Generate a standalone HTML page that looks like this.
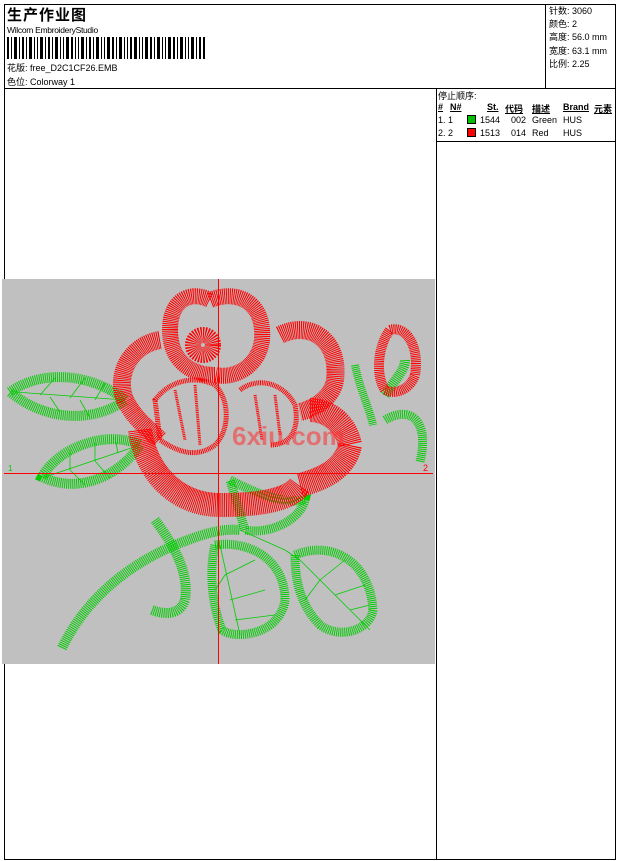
<!DOCTYPE html>
<html><head><meta charset="utf-8"><style>
*{margin:0;padding:0}
body{width:620px;height:861px;background:#fff;position:relative;overflow:hidden;font-family:"Liberation Sans","Noto Sans CJK SC",sans-serif;font-size:9px;color:#000}
.a{position:absolute;white-space:nowrap}
.l{position:absolute;background:#000}
</style></head><body>
<div class="l" style="left:4px;top:4px;width:612px;height:1px"></div>
<div class="l" style="left:4px;top:859px;width:612px;height:1px"></div>
<div class="l" style="left:4px;top:4px;width:1px;height:856px"></div>
<div class="l" style="left:615px;top:4px;width:1px;height:856px"></div>
<div class="l" style="left:4px;top:88px;width:612px;height:1px"></div>
<div class="l" style="left:545px;top:4px;width:1px;height:84px"></div>
<div class="l" style="left:436px;top:88px;width:1px;height:771px"></div>
<div class="l" style="left:436px;top:141px;width:180px;height:1px"></div>

<div class="a" style="left:7px;top:4px;font-size:15px;font-weight:bold;letter-spacing:1px">生产作业图</div>
<div class="a" style="left:7px;top:25px;font-size:8.5px;letter-spacing:-0.3px">Wilcom EmbroideryStudio</div>
<svg class="a" style="left:7px;top:37px" width="198" height="22">
<g fill="#000">
<rect x="0" y="0" width="2" height="22"/><rect x="4" y="0" width="1" height="22"/><rect x="7" y="0" width="3" height="22"/><rect x="12" y="0" width="1" height="22"/><rect x="15" y="0" width="2" height="22"/><rect x="19" y="0" width="1" height="22"/><rect x="22" y="0" width="3" height="22"/><rect x="27" y="0" width="1" height="22"/><rect x="30" y="0" width="1" height="22"/><rect x="33" y="0" width="3" height="22"/><rect x="38" y="0" width="1" height="22"/><rect x="41" y="0" width="2" height="22"/><rect x="45" y="0" width="1" height="22"/><rect x="48" y="0" width="3" height="22"/><rect x="53" y="0" width="1" height="22"/><rect x="56" y="0" width="1" height="22"/><rect x="59" y="0" width="3" height="22"/><rect x="64" y="0" width="2" height="22"/><rect x="68" y="0" width="1" height="22"/><rect x="71" y="0" width="1" height="22"/><rect x="74" y="0" width="3" height="22"/><rect x="79" y="0" width="1" height="22"/><rect x="82" y="0" width="2" height="22"/><rect x="86" y="0" width="1" height="22"/><rect x="89" y="0" width="3" height="22"/><rect x="94" y="0" width="1" height="22"/><rect x="97" y="0" width="1" height="22"/><rect x="100" y="0" width="3" height="22"/><rect x="105" y="0" width="2" height="22"/><rect x="109" y="0" width="1" height="22"/><rect x="112" y="0" width="3" height="22"/><rect x="117" y="0" width="1" height="22"/><rect x="120" y="0" width="1" height="22"/><rect x="123" y="0" width="2" height="22"/><rect x="127" y="0" width="3" height="22"/><rect x="132" y="0" width="1" height="22"/><rect x="135" y="0" width="1" height="22"/><rect x="138" y="0" width="3" height="22"/><rect x="143" y="0" width="2" height="22"/><rect x="147" y="0" width="1" height="22"/><rect x="150" y="0" width="3" height="22"/><rect x="155" y="0" width="1" height="22"/><rect x="158" y="0" width="1" height="22"/><rect x="161" y="0" width="3" height="22"/><rect x="166" y="0" width="2" height="22"/><rect x="170" y="0" width="1" height="22"/><rect x="173" y="0" width="3" height="22"/><rect x="178" y="0" width="1" height="22"/><rect x="181" y="0" width="1" height="22"/><rect x="184" y="0" width="3" height="22"/><rect x="189" y="0" width="1" height="22"/><rect x="192" y="0" width="2" height="22"/><rect x="196" y="0" width="2" height="22"/>
</g></svg>
<div class="a" style="left:7px;top:61px">花版: free_D2C1CF26.EMB</div>
<div class="a" style="left:7px;top:75px">色位: Colorway 1</div>

<div class="a" style="left:549px;top:5px;line-height:13.2px">针数: 3060<br>颜色: 2<br>高度: 56.0 mm<br>宽度: 63.1 mm<br>比例: 2.25</div>

<div class="a" style="left:438px;top:89px">停止顺序:</div>
<div class="a" style="left:438px;top:102px;font-weight:bold;text-decoration:underline">#</div>
<div class="a" style="left:450px;top:102px;font-weight:bold;text-decoration:underline">N#</div>
<div class="a" style="left:487px;top:102px;font-weight:bold;text-decoration:underline">St.</div>
<div class="a" style="left:505px;top:102px;font-weight:bold;text-decoration:underline">代码</div>
<div class="a" style="left:532px;top:102px;font-weight:bold;text-decoration:underline">描述</div>
<div class="a" style="left:563px;top:102px;font-weight:bold;text-decoration:underline">Brand</div>
<div class="a" style="left:594px;top:102px;font-weight:bold;text-decoration:underline">元素</div>
<div class="a" style="left:438px;top:115px">1. 1</div>
<div class="a" style="left:467px;top:115px;width:9px;height:9px;background:#00c000;border:1px solid #000;box-sizing:border-box"></div>
<div class="a" style="left:480px;top:115px">1544</div><div class="a" style="left:511px;top:115px">002</div><div class="a" style="left:532px;top:115px">Green</div><div class="a" style="left:563px;top:115px">HUS</div>
<div class="a" style="left:438px;top:128px">2. 2</div>
<div class="a" style="left:467px;top:128px;width:9px;height:9px;background:#ff0000;border:1px solid #000;box-sizing:border-box"></div>
<div class="a" style="left:480px;top:128px">1513</div><div class="a" style="left:511px;top:128px">014</div><div class="a" style="left:532px;top:128px">Red</div><div class="a" style="left:563px;top:128px">HUS</div>

<svg class="a" style="left:0;top:0" width="620" height="861">
<rect x="2" y="279" width="433" height="385" fill="#c0c0c0"/>
<g fill="none" stroke="#00cc00" stroke-dasharray="1 1">
<path d="M10,392 C40,370 90,372 125,400 C100,420 50,425 10,392 Z" stroke-width="10"/>
<path d="M42,477 C60,445 110,430 140,445 C120,475 80,495 42,477 Z" stroke-width="10"/>
<path d="M215,545 C250,540 285,560 285,600 C280,635 235,640 222,630 C210,600 210,565 215,545 Z" stroke-width="9"/>
<path d="M295,555 C330,540 370,560 373,610 C370,630 340,640 320,625 C300,605 295,580 295,555 Z" stroke-width="9"/>
<path d="M230,480 C250,490 280,505 305,500 C300,520 270,535 245,530 Z" stroke-width="9"/>
<path d="M62,648 C90,590 140,560 175,545 C200,535 220,528 240,530" stroke-width="10"/>
<path d="M155,520 C170,540 190,570 185,600 C180,615 165,615 152,610" stroke-width="10"/>
<path d="M355,365 C360,390 370,410 373,425" stroke-width="8"/>
<path d="M385,420 C410,405 430,420 420,462" stroke-width="9"/>
<path d="M385,395 C395,380 405,370 405,360" stroke-width="10"/>
</g>
<g fill="none" stroke="#00cc00" stroke-width="0.8">
<path d="M15,392 L125,400 M40,395 L55,378 M70,398 L85,378 M95,400 L105,383 M50,397 L60,412 M80,400 L90,418"/>
<path d="M45,477 L140,445 M70,470 L70,450 M95,461 L95,443 M118,453 L115,438 M70,470 L85,485 M95,461 L110,478"/>
<path d="M220,545 L240,635 M225,575 L255,560 M230,600 L265,590 M235,620 L275,615 M225,575 L215,590"/>
<path d="M300,560 L370,630 M320,580 L345,560 M335,595 L365,585 M350,610 L370,605 M320,580 L305,600"/>
<path d="M240,530 L285,550 L300,560"/>
</g>
<g fill="none" stroke="#ff0000" stroke-dasharray="1 0.8">
<path d="M170,330 C170,300 190,290 210,300 C235,290 260,300 262,330 C265,360 240,380 215,375 C190,375 170,360 170,330 Z" stroke-width="16"/>
<circle cx="203" cy="345" r="10" stroke-width="16"/>
<path d="M160,340 C130,345 115,375 125,400 C135,420 150,430 160,440" stroke-width="18"/>
<path d="M280,335 C310,320 340,340 335,380 C332,400 310,410 300,412" stroke-width="18"/>
<path d="M140,430 C145,470 175,505 220,505 C260,505 290,500 300,485 C320,480 345,470 350,445 C345,420 325,410 310,410" stroke-width="24"/>
<path d="M155,400 C170,380 195,375 215,385 C230,400 230,430 215,445 C195,460 175,450 160,440 Z" stroke-width="5"/>
<path d="M240,390 C260,375 285,385 295,405 C300,430 290,445 270,445" stroke-width="5"/>
<path d="M175,390 L185,440 M195,385 L200,445 M255,395 L262,440 M275,395 L280,435" stroke-width="3"/>
<path d="M390,330 C405,325 420,345 415,375 C410,390 395,395 385,390 C375,375 378,345 390,330 Z" stroke-width="10"/>
</g>
<text x="232" y="445" font-family="Liberation Sans,sans-serif" font-size="26" font-weight="bold" fill="#ff3030" opacity="0.55">6xiu.com</text>
<line x1="4" y1="473.5" x2="433" y2="473.5" stroke="#ff0000" stroke-width="1"/>
<line x1="218.5" y1="279" x2="218.5" y2="664" stroke="#ff0000" stroke-width="1"/>
<text x="8" y="471" font-size="8" fill="#00cc00" font-family="Liberation Sans,sans-serif">1</text>
<text x="423" y="471" font-size="9" fill="#ff0000" font-family="Liberation Sans,sans-serif">2</text>
</svg>
</body></html>
